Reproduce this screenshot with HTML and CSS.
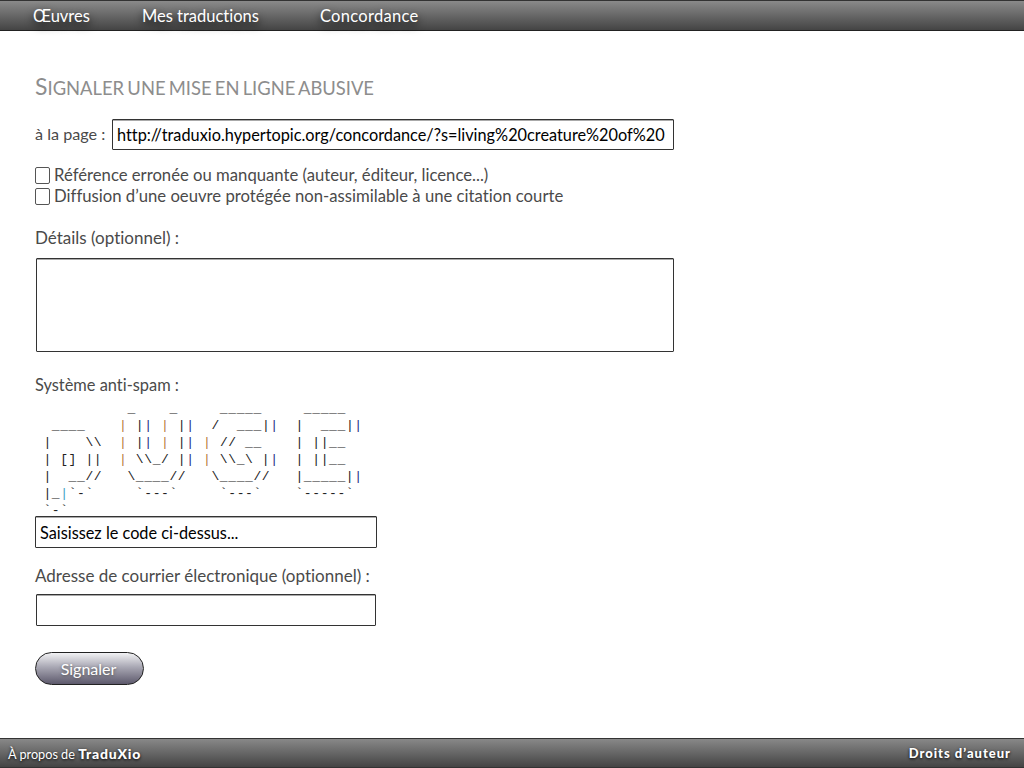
FILE: index.html
```html
<!DOCTYPE html>
<html lang="fr">
<head>
    <meta charset="UTF-8">
    <meta name="viewport" content="width=device-width, initial-scale=1.0">
    <title>Signaler une mise en ligne abusive</title>
    <link rel="stylesheet" href="styles.css">
</head>
<body>
    <header class="topbar">
        <nav class="nav">
            <a class="nav-works" href="#">Œuvres</a>
            <a class="nav-mine" href="#">Mes traductions</a>
            <a class="nav-conc" href="#">Concordance</a>
        </nav>
    </header>

    <main class="content">
        <h1>Signaler une mise en ligne abusive</h1>
        <form class="report">
            <div class="page-row">
                <label for="page">à la page :</label>
                <input class="field field-page" id="page" type="text" value="http://traduxio.hypertopic.org/concordance/?s=living%20creature%20of%20">
            </div>

            <div class="reasons">
                <label class="reason"><input type="checkbox"><span class="box"></span>Référence erronée ou manquante (auteur, éditeur, licence...)</label>
                <label class="reason"><input type="checkbox"><span class="box"></span>Diffusion d’une oeuvre protégée non-assimilable à une citation courte</label>
            </div>

            <label class="title details-label" for="details">Détails (optionnel) :</label>
            <textarea class="field field-details" id="details"></textarea>

            <label class="title spam-label" for="code">Système anti-spam :</label>
<pre class="captcha">           _    _     _____     _____
  ____    <i class="o">|</i> |<i class="b">|</i> <i class="o">|</i> |<i class="b">|</i>  /  ___|<i class="b">|</i>  |  ___|<i class="b">|</i>
 |    \\  <i class="o">|</i> |<i class="b">|</i> <i class="o">|</i> |<i class="b">|</i> <i class="o">|</i> // __    | ||__
 | [] ||  <i class="o">|</i> \\_/ |<i class="b">|</i> <i class="o">|</i> \\_\ |<i class="b">|</i>  | ||__
 |  __//   \____//   \____//   |_____|<i class="b">|</i>
 |_<i class="c">|</i>`-`     `---`     `---`    `-----`
 `-`</pre>
            <input class="field field-code" id="code" type="text" value="Saisissez le code ci-dessus...">

            <label class="title mail-label" for="mail">Adresse de courrier électronique (optionnel) :</label>
            <input class="field field-mail" id="mail" type="text">

            <button class="send" type="button">Signaler</button>
        </form>
    </main>

    <footer class="bottombar">
        <span>À propos de <b class="brand">TraduXio</b></span>
        <b class="rights">Droits d’auteur</b>
    </footer>
</body>
</html>
```

FILE: styles.css
```css
html, body {
    height: 100%;
}

body {
    margin: 0;
    display: flex;
    flex-direction: column;
    min-height: 768px;
    box-sizing: border-box;
    font-family: 'Lato', 'Open Sans', sans-serif;
    font-size: 16px;
    font-variant-ligatures: none;
    color: #4a4a4a;
    background: #fff;
    overflow: hidden;
}

.topbar {
    height: 29px;
    background: linear-gradient(#8a8a8a, #444);
    border-top: 1px solid #333;
    border-bottom: 1px solid #222;
    flex-shrink: 0;
}

.nav {
    display: flex;
    height: 29px;
    align-items: center;
    font-size: 16.5px;
}

.nav a {
    color: #fff;
    text-decoration: none;
    text-shadow: 0 4px 8px #000;
}

.nav-works {
    margin-left: 33px;
}

.nav-mine {
    margin-left: 52px;
}

.nav-conc {
    margin-left: 61px;
    letter-spacing: 0.3px;
}

.content {
    flex: 1;
    padding: 0 35px;
}

h1 {
    margin: 42px 0 0;
    font-size: 18.4px;
    line-height: 26px;
    font-weight: 400;
    text-transform: uppercase;
    word-spacing: -1.5px;
    color: #8d8d8d;
}

h1::first-letter {
    font-size: 23px;
}

.page-row {
    display: flex;
    align-items: center;
    margin-top: 18px;
}

.page-row label {
    width: 77px;
    padding-bottom: 3px;
    font-size: 16.2px;
}

.field {
    display: block;
    box-sizing: border-box;
    margin: 0;
    padding: 0 4px;
    border: 1px solid #333;
    border-radius: 1px;
    box-shadow: inset 0 1px 0 #aaa;
    background: #fff;
    font-family: 'Lato', 'Open Sans', sans-serif;
    font-size: 16.3px;
    font-variant-ligatures: none;
    color: #000;
    outline: none;
    resize: none;
}

.field-page {
    width: 562px;
    height: 31px;
}

.reasons {
    margin-top: 14px;
}

.reason {
    display: flex;
    align-items: center;
    height: 21px;
    font-size: 16.7px;
}

.reason input {
    display: none;
}

.box {
    width: 13px;
    height: 15px;
    margin: 2px 4px 0 0;
    border: 1px solid #555;
    border-radius: 2px;
    background: #fff;
}

.title {
    display: block;
    line-height: 20px;
    font-size: 17px;
}

.details-label {
    margin-top: 22px;
}

.field-details {
    width: 638px;
    height: 94px;
    margin: 10px 0 0 1px;
}

.spam-label {
    margin-top: 23px;
    font-size: 16.4px;
}

.captcha {
    height: 116px;
    margin: 0;
    padding-top: 5px;
    font-family: 'Liberation Mono', monospace;
    font-size: 13px;
    letter-spacing: 0.6px;
    line-height: 17px;
    color: #222;
}

.captcha i {
    font-style: normal;
}

.o {
    color: #b5763a;
}

.b {
    color: #1d2a80;
}

.c {
    color: #3f9fc4;
}

.field-code {
    width: 342px;
    height: 32px;
}

.mail-label {
    margin-top: 18px;
}

.field-mail {
    width: 340px;
    height: 32px;
    margin: 8px 0 0 1px;
}

.send {
    display: block;
    width: 109px;
    height: 33px;
    margin-top: 26px;
    padding: 0 2px 0 0;
    border: 1px solid #222;
    border-radius: 17px;
    background: linear-gradient(#f2f2f4, #a9a8b4 45%, #5d596c);
    font-family: 'Lato', 'Open Sans', sans-serif;
    font-size: 16px;
    color: #fff;
    text-shadow: 0 1px 3px #555;
}

.bottombar {
    display: flex;
    justify-content: space-between;
    align-items: center;
    height: 28px;
    padding: 0 13px 0 8px;
    background: linear-gradient(#888, #444);
    border-top: 1px solid #333;
    border-bottom: 1px solid #333;
    flex-shrink: 0;
    font-size: 12.7px;
    color: #fff;
    text-shadow: 0 1px 3px #000;
}

.brand {
    font-size: 14px;
    font-weight: 900;
    letter-spacing: 0.8px;
}

.rights {
    font-size: 13px;
    font-weight: 900;
    letter-spacing: 1px;
}
```
